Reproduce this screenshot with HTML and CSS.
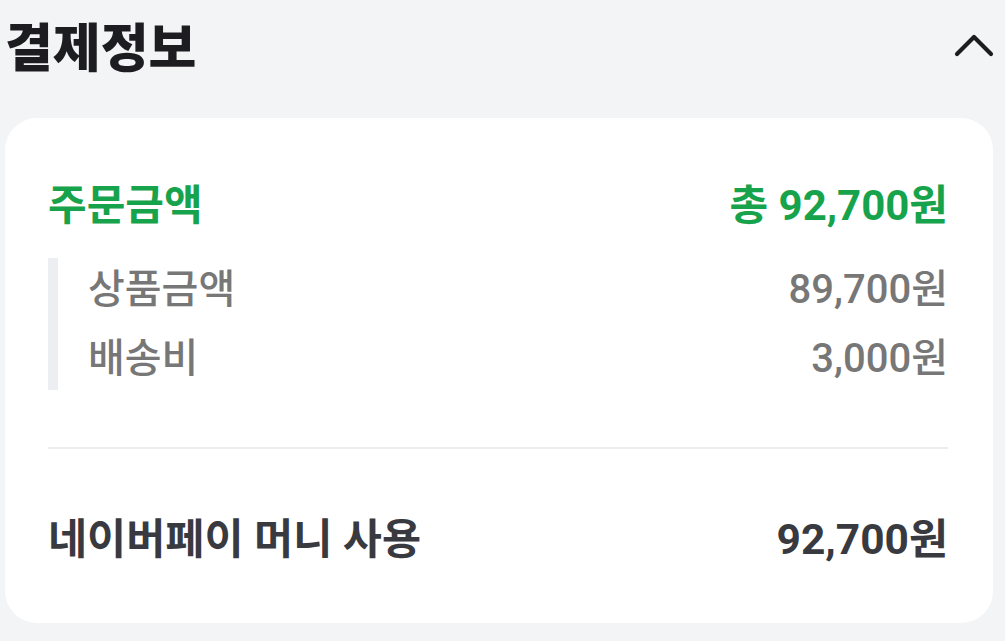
FILE: index.html
```html
<!DOCTYPE html>
<html lang="ko">
<head>
<meta charset="utf-8">
<link rel="stylesheet" href="styles.css">
</head>
<body>
<div class="page">
  <div class="header">
    <h1 class="title">결제정보</h1>
    <svg class="chevron" width="40" height="24" viewBox="0 0 40 24"><path d="M3 21 L20 4 L37 21" fill="none" stroke="#1d1d21" stroke-width="4.2" stroke-linecap="round" stroke-linejoin="round"/></svg>
  </div>
  <div class="card">
    <div class="row total">
      <span>주문금액</span>
      <span>총 92,700원</span>
    </div>
    <div class="sub">
      <div class="row item"><span>상품금액</span><span>89,700원</span></div>
      <div class="row item"><span>배송비</span><span>3,000원</span></div>
    </div>
    <div class="divider"></div>
    <div class="row pay">
      <span>네이버페이 머니 사용</span>
      <span>92,700원</span>
    </div>
  </div>
</div>
</body>
</html>
```

FILE: styles.css
```css
html, body {
  margin: 0;
  padding: 0;
  background: #f3f4f6;
}
body {
  font-family: Roboto, "Noto Sans CJK KR", sans-serif;
  width: 1005px;
  height: 641px;
  overflow: hidden;
}
.header {
  height: 90px;
  display: flex;
  align-items: center;
  justify-content: space-between;
  padding: 0 11px 0 5px;
}
.title {
  margin: 0;
  font-family: "Noto Sans CJK KR", sans-serif;
  font-size: 52px;
  font-weight: 900;
  color: #1d1d21;
  line-height: 1;
}
.chevron {
  display: block;
}
.card {
  margin: 28px 12px 0 5px;
  background: #ffffff;
  border-radius: 32px;
  padding: 55px 45px 0 43px;
  height: 505px;
  box-sizing: border-box;
}
.row {
  display: flex;
  justify-content: space-between;
  align-items: center;
}
.total {
  height: 56px;
  font-size: 42px;
  font-weight: 700;
  color: #17a34b;
}
.sub {
  margin-top: 29px;
  border-left: 10px solid #eceef2;
  padding: 0 0 7px 30px;
  display: flex;
  flex-direction: column;
  gap: 13px;
}
.item {
  height: 56px;
  font-size: 40px;
  font-weight: 500;
  color: #777777;
}
.divider {
  margin-top: 57px;
  height: 2px;
  background: #ededef;
}
.pay {
  margin-top: 58px;
  height: 56px;
  font-size: 42.5px;
  font-weight: 700;
  color: #393a40;
}
```
